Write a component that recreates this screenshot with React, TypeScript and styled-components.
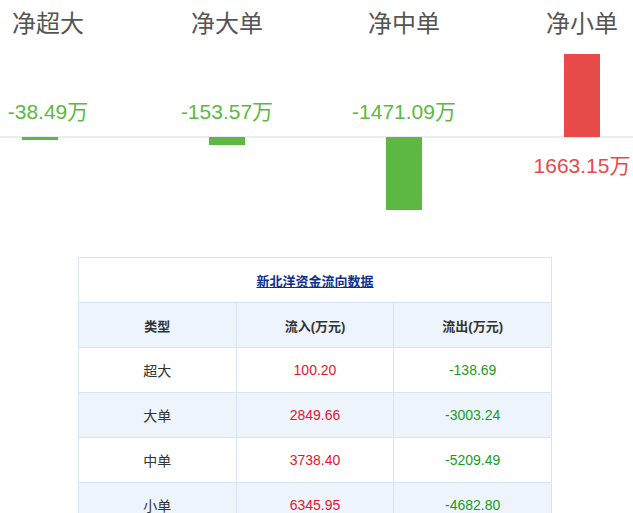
import React from 'react';
import styled, { createGlobalStyle } from 'styled-components';

const Global = createGlobalStyle`
  body { margin: 0; background: #fff; font-family: "Microsoft YaHei", "Liberation Sans", "Noto Sans CJK SC", sans-serif; }
`;

const Page = styled.div`
  width: 633px;
  height: 513px;
  overflow: hidden;
`;

const Chart = styled.svg`
  display: block;
`;

const TableWrap = styled.div`
  margin: 37px 0 0 78px;
  width: 474px;
`;

const Table = styled.table`
  width: 100%;
  border-collapse: collapse;
  table-layout: fixed;
  font-family: "Liberation Sans", "Noto Sans CJK SC", sans-serif;
`;

const Caption = styled.th`
  height: 42px;
  border: 1px solid #d6e4f8;
  background: #fff;
  font-size: 13px;
  font-weight: bold;
  a { color: #0f2f8a; text-decoration: underline; }
`;

const Row = styled.tr<{ $shade?: boolean }>`
  background: ${p => (p.$shade ? '#edf4fc' : '#fff')};
`;

const Cell = styled.td<{ $color?: string; $bold?: boolean }>`
  height: 42px;
  border: 1px solid #d6e4f8;
  text-align: center;
  font-size: ${p => (p.$bold ? '13px' : '14px')};
  font-weight: ${p => (p.$bold ? 'bold' : 'normal')};
  color: ${p => p.$color || '#333'};
`;

const bars = [
  { title: '净超大', value: '-38.49万', cx: 40, y: 137, h: 3, up: false },
  { title: '净大单', value: '-153.57万', cx: 227, y: 137, h: 8, up: false },
  { title: '净中单', value: '-1471.09万', cx: 404, y: 137, h: 73, up: false },
  { title: '净小单', value: '1663.15万', cx: 582, y: 54, h: 83, up: true },
];
const titleX = [48, 227, 404, 582];
const rows = [
  ['超大', '100.20', '-138.69'],
  ['大单', '2849.66', '-3003.24'],
  ['中单', '3738.40', '-5209.49'],
  ['小单', '6345.95', '-4682.80'],
];

export default function App() {
  return (
    <Page>
      <Global />
      <Chart width={633} height={220} viewBox="0 0 633 220">
        <line x1={0} x2={633} y1={137} y2={137} stroke="#e2e7ee" strokeWidth={1.5} />
        {bars.map((b, i) => (
          <g key={b.title}>
            <text x={titleX[i]} y={32} textAnchor="middle" fontSize={24} fill="#555"
              fontFamily='"Noto Sans CJK SC", sans-serif'>{b.title}</text>
            <rect x={b.cx - 18} y={b.y} width={36} height={b.h} fill={b.up ? '#e84a4a' : '#5cb843'} />
            <text x={b.up ? 582 : titleX[i]} y={b.up ? 173 : 119} textAnchor="middle" fontSize={21}
              fill={b.up ? '#e84a4a' : '#5cb843'}
              fontFamily='"Liberation Sans", "Noto Sans CJK SC", sans-serif'>{b.value}</text>
          </g>
        ))}
      </Chart>
      <TableWrap>
        <Table>
          <thead>
            <tr>
              <Caption colSpan={3}><a href="#">新北洋资金流向数据</a></Caption>
            </tr>
            <Row $shade>
              <Cell $bold>类型</Cell>
              <Cell $bold>流入(万元)</Cell>
              <Cell $bold>流出(万元)</Cell>
            </Row>
          </thead>
          <tbody>
            {rows.map((r, i) => (
              <Row key={r[0]} $shade={i % 2 === 1}>
                <Cell>{r[0]}</Cell>
                <Cell $color="#e4162c">{r[1]}</Cell>
                <Cell $color="#1c9a1c">{r[2]}</Cell>
              </Row>
            ))}
          </tbody>
        </Table>
      </TableWrap>
    </Page>
  );
}
